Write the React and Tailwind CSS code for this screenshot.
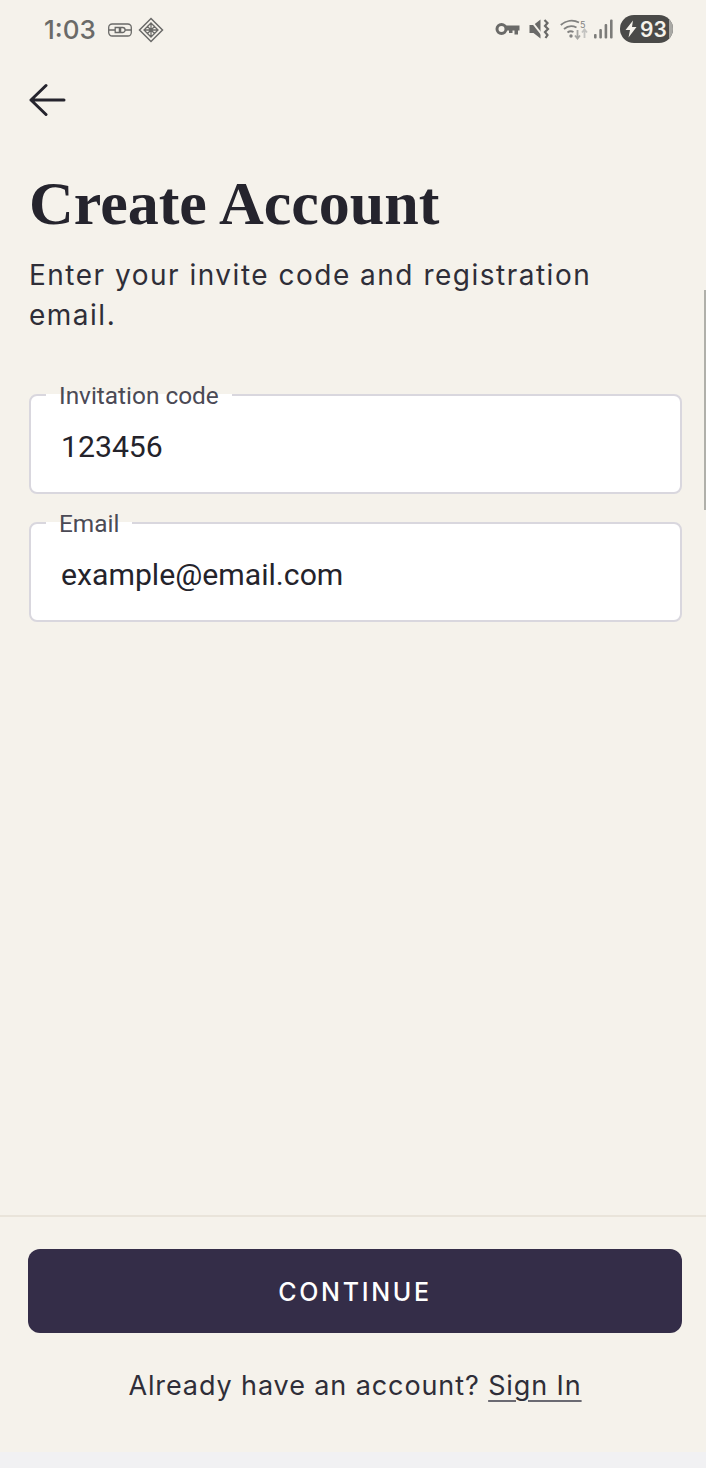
import React from "react";

function Field({ label, value, mt }) {
  return (
    <div className={`relative h-[100px] w-[653px] rounded-[8px] border-2 border-[#d9d7de] bg-white ${mt}`}>
      <span className="absolute left-[15px] top-[-14px] bg-[linear-gradient(to_bottom,#f5f2eb_0,#f5f2eb_12px,#ffffff_12px)] px-[13px] font-['Roboto',sans-serif] text-[24.400px] leading-[27px] text-[#4b4a55]">
        {label}
      </span>
      <div className="pl-[30px] pt-[32px] font-['Roboto',sans-serif] text-[30.200px] leading-[38px] text-[#24232b]">{value}</div>
    </div>
  );
}

function StatusBar() {
  return (
    <div className="flex h-[60px] items-center justify-between pl-[44px] pr-[34px] text-[#6a6a68]">
      <div className="flex items-center">
        <span className="font-['Inter',sans-serif] text-[26px] font-medium leading-none">1:03</span>
        <svg className="ml-[11px]" width="26" height="16" viewBox="0 0 26 16" fill="none" stroke="currentColor" strokeWidth="1.3">
          <rect x="1.700" y="2" width="22.600" height="12" rx="3.500" />
          <path d="M1.700 8h6.500M17.800 8h6.500M8.200 5.500h4.200v5H8.200zM13.600 5.500h2a2.500 2.500 0 0 1 0 5h-2z" />
        </svg>
        <svg className="ml-[5px]" width="26" height="26" viewBox="0 0 26 26" fill="none" stroke="currentColor" strokeWidth="1.500">
          <path d="M13 1.500 24.500 13 13 24.500 1.500 13z" />
          <path d="M13 6l7 7-7 7-7-7zM9 9l8 8M17 9l-8 8M13 6v14M6 13h14" strokeWidth="1.300" />
        </svg>
      </div>
      <div className="-mt-[2px] flex items-center">
        <svg className="-ml-[4px]" width="25" height="14" viewBox="0 0 25 14" fill="none">
          <circle cx="6.500" cy="7" r="4.500" stroke="currentColor" strokeWidth="3" />
          <path d="M11 3.500h13.500v5h-1.500v4h-3.500v-4h-2v2.500h-3.500v-2.500h-3z" fill="currentColor" />
        </svg>
        <svg className="ml-[9px]" width="21" height="20" viewBox="0 0 21 20" fill="currentColor">
          <path d="M0.500 6h4l7-5.500v19l-7-5.500h-4z" />
          <path d="M1 0.500 14 17" stroke="#f5f2eb" strokeWidth="2" />
          <path d="M15.500 1l3 3-2.500 3 3 3-3 3 2.500 3-2 3" fill="none" stroke="currentColor" strokeWidth="2.200" />
        </svg>
        <svg className="ml-[10px] overflow-visible" width="28" height="20" viewBox="0 0 28 20" fill="none">
          <path d="M0.800 6C6 1.500 13 0.500 19 3.500M4 10c3.800-3.200 8.500-3.500 12.500-1.500M7.500 13.500c2-1.500 4-1.500 6-.500" stroke="#828280" strokeWidth="1.900" />
          <circle cx="11" cy="17" r="1.700" fill="#828280" />
          <path d="M17.500 11v8M15 16.500l2.500 3 2.500-3" stroke="#a5a5a2" strokeWidth="1.800" />
          <path d="M24.500 19v-8M22 13.500l2.500-3 2.500 3" stroke="#c4c4c1" strokeWidth="1.800" />
          <text x="20" y="9" fontSize="9" fontFamily="Inter, sans-serif" fill="#828280">5</text>
        </svg>
        <svg className="ml-[6px]" width="19" height="20" viewBox="0 0 19 20" fill="#7c7c79">
          <rect x="0" y="15" width="2.600" height="4.500" rx="1" />
          <rect x="5.300" y="10" width="2.600" height="9.500" rx="1" />
          <rect x="10.600" y="5" width="2.600" height="14.500" rx="1" />
          <rect x="16" y="0.500" width="2.600" height="19" rx="1" />
        </svg>
        <div className="relative ml-[7px] -mr-[1px] flex h-[28px] w-[53px] items-center overflow-hidden rounded-full bg-[#4a4a48] pl-[5px]">
          <svg width="12" height="18" viewBox="0 0 12 18" fill="#f5f2eb">
            <path d="M8 0.500 0.500 10h4.500l-1.500 7.500 8-10.500h-4.500z" />
          </svg>
          <span className="ml-[3px] font-['Inter',sans-serif] text-[21px] font-semibold leading-none text-[#f5f2eb]">93</span>
          <span className="absolute bottom-0 right-0 top-0 w-[4px] bg-[#a9a9a5]" />
        </div>
      </div>
    </div>
  );
}

export default function App() {
  return (
    <div className="relative flex h-[1468px] w-[706px] flex-col overflow-hidden bg-[#f5f2eb]">
      <StatusBar />
      <div className="flex-1 pl-[29px]">
        <svg className="mt-[22px]" width="38" height="36" viewBox="0 0 38 36" fill="none" stroke="#25242d" strokeWidth="3" strokeLinecap="round" strokeLinejoin="round">
          <path d="M2 18h33M17 3.500 2 18l15 14.500" />
        </svg>
        <h1 className="mt-[47px] font-['Liberation_Serif',serif] text-[62px] font-bold leading-[76px] text-[#25242d]">Create Account</h1>
        <p className="mt-[14px] w-[600px] font-['Inter',sans-serif] text-[28px] leading-[40px] tracking-[1.500px] text-[#2f2e38]">
          Enter your invite code and registration email.
        </p>
        <Field label="Invitation code" value="123456" mt="mt-[59px]" />
        <Field label="Email" value="example@email.com" mt="mt-[28px]" />
      </div>
      <div className="h-[237px] border-t-2 border-[#e9e4da] pl-[28px] pt-[32px]">
        <button className="h-[84px] w-[654px] rounded-[12px] bg-[#342d48] pt-[3px] font-['Inter',sans-serif] text-[25px] font-medium tracking-[2.700px] text-white">
          CONTINUE
        </button>
        <p className="mt-[33px] w-[654px] text-center font-['Inter',sans-serif] text-[27px] leading-[40px] tracking-[0.900px] text-[#2f2e38]">
          Already have an account? <a className="underline decoration-[#6b6a72] underline-offset-[5px]">Sign In</a>
        </p>
      </div>
      <div className="h-[16px] bg-[#f1f1f3]" />
      <span className="absolute right-0 top-[290px] h-[220px] w-[2px] bg-[#b0b0aa]" />
    </div>
  );
}
